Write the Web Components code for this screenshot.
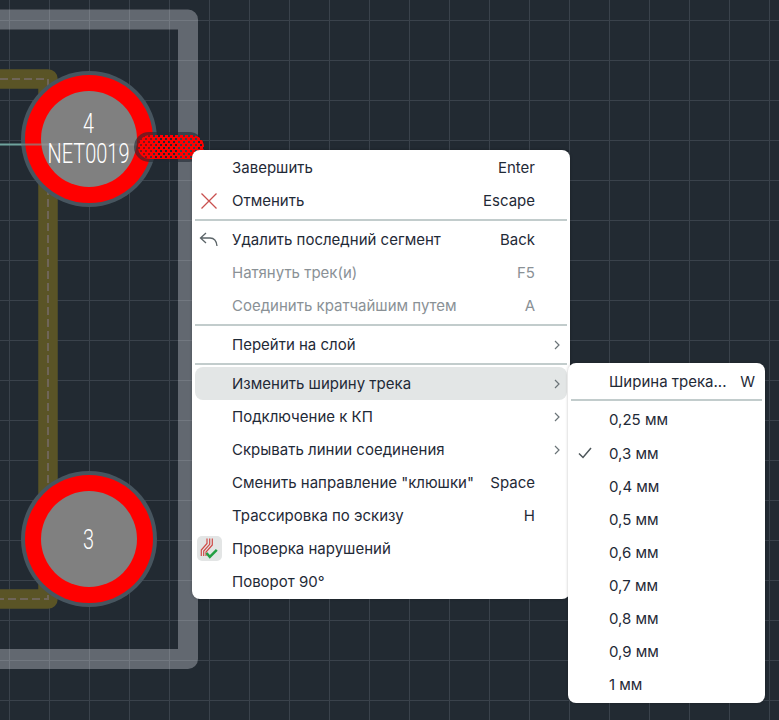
<!DOCTYPE html>
<html lang="ru">
<head>
<meta charset="utf-8">
<title>Трассировка</title>
<style>
  html, body { margin: 0; padding: 0; background: #222a32; }
  body { width: 779px; height: 720px; overflow: hidden; font-family: Inter, "Liberation Sans", sans-serif; }
</style>
</head>
<body>
<pcb-canvas>
  <ctx-menu style="left:192px;top:150px;width:378px">
    <ctx-item shortcut="Enter">Завершить</ctx-item>
    <ctx-item shortcut="Escape">
      <svg slot="icon" width="18" height="18" viewBox="0 0 18 18" fill="none" stroke="#c9504f" stroke-width="1.3"><path d="M1.5 1.5l15 15M16.5 1.5l-15 15"/></svg>
      Отменить
    </ctx-item>
    <ctx-sep></ctx-sep>
    <ctx-item shortcut="Back">
      <svg slot="icon" width="20" height="16" viewBox="0 0 20 16" fill="none" stroke="#5b6468" stroke-width="1.3"><path d="M7 1L1.5 6 7 11M1.5 6H11c4 0 6.500 3 7 8"/></svg>
      Удалить последний сегмент
    </ctx-item>
    <ctx-item shortcut="F5" disabled>Натянуть трек(и)</ctx-item>
    <ctx-item shortcut="A" disabled>Соединить кратчайшим путем</ctx-item>
    <ctx-sep></ctx-sep>
    <ctx-item arrow>Перейти на слой</ctx-item>
    <ctx-sep></ctx-sep>
    <ctx-item arrow active>Изменить ширину трека</ctx-item>
    <ctx-item arrow>Подключение к КП</ctx-item>
    <ctx-item arrow>Скрывать линии соединения</ctx-item>
    <ctx-item shortcut="Space">Сменить направление "клюшки"</ctx-item>
    <ctx-item shortcut="H">Трассировка по эскизу</ctx-item>
    <ctx-item>
      <svg slot="icon" width="25" height="25" viewBox="0 0 25 25" fill="none">
        <rect width="25" height="25" rx="5" fill="#e3e5e5"/>
        <path d="M4.300 20v-6l5.700-6.500V2.500M6.700 20v-5l6-6.700V2.500M9 20v-4l6.300-7V2.500" stroke="#cf4a46" stroke-width="1.200"/>
        <path d="M9.500 17l3.300 3.800 7-7" stroke="#23a043" stroke-width="2.500"/>
      </svg>
      Проверка нарушений
    </ctx-item>
    <ctx-item>Поворот 90°</ctx-item>
  </ctx-menu>

  <ctx-menu style="left:568px;top:363px;width:197px;--trail:7px;--row:33.13px;--pad-top:2.3px;--sep-top:1px;--icon-gap:10px">
    <ctx-item shortcut="W">Ширина трека...</ctx-item>
    <ctx-sep></ctx-sep>
    <ctx-item>0,25 мм</ctx-item>
    <ctx-item>
      <svg slot="icon" width="14" height="12" viewBox="0 0 14 12" fill="none" stroke="#4c5559" stroke-width="1.500"><path d="M1 6.500l4 4 8-9.500"/></svg>
      0,3 мм
    </ctx-item>
    <ctx-item>0,4 мм</ctx-item>
    <ctx-item>0,5 мм</ctx-item>
    <ctx-item>0,6 мм</ctx-item>
    <ctx-item>0,7 мм</ctx-item>
    <ctx-item>0,8 мм</ctx-item>
    <ctx-item>0,9 мм</ctx-item>
    <ctx-item>1 мм</ctx-item>
  </ctx-menu>
</pcb-canvas>

<script>
  class PcbCanvas extends HTMLElement {
    constructor() {
      super();
      this.attachShadow({ mode: "open" });
    }

    connectedCallback() {
      this.shadowRoot.innerHTML = `
        <style>
          :host { display: block; position: relative; width: 779px; height: 720px; overflow: hidden; background: #222a32; }
          svg { display: block; }
          text { fill: #fff; font-family: Roboto, sans-serif; font-weight: 300; text-anchor: middle; }
        </style>
        <svg width="779" height="720" viewBox="0 0 779 720">
          <defs>
            <pattern id="grid" width="40" height="40" patternUnits="userSpaceOnUse" x="9" y="20">
              <path d="M0.500 0V40M0 0.500H40" stroke="#3a424b" stroke-width="1" fill="none"/>
            </pattern>
            <pattern id="hatch" width="5" height="6" patternUnits="userSpaceOnUse">
              <path fill-rule="evenodd" fill="#ff0000" shape-rendering="crispEdges" d="M0 0H5V6H0zM0 0H2V2H0zM3 3H5V5H3z"/>
            </pattern>
          </defs>
          <rect width="779" height="720" fill="url(#grid)"/>

          <!-- board outline -->
          <path d="M-20 19.500H188V659H-20" fill="none" stroke="#dfe3e8" stroke-opacity=".34" stroke-width="20" stroke-linejoin="round"/>

          <!-- track -->
          <path d="M0 79H48V599H0" fill="none" stroke="#5a5426" stroke-width="19.500" stroke-linejoin="round"/>
          <path d="M0 79H48V599H0" fill="none" stroke="#6f6558" stroke-width="2" stroke-dasharray="8 4"/>

          <!-- net line -->
          <path d="M0 144.500H60" stroke="#6fa39d" stroke-width="2"/>

          <!-- pad 4 -->
          <circle cx="89" cy="139" r="68" fill="#47555f"/>
          <circle cx="89" cy="139" r="64" fill="#f00"/>
          <circle cx="89" cy="139" r="48" fill="#808080"/>
          <path d="M21 144.500H41" stroke="#6fa39d" stroke-opacity=".6" stroke-width="2"/>
          <path d="M41 144.500H137" stroke="#b9b9b9" stroke-opacity=".25" stroke-width="2"/>
          <text x="88.500" y="133" font-size="28" textLength="11" lengthAdjust="spacingAndGlyphs">4</text>
          <text x="88.500" y="163" font-size="28" textLength="82" lengthAdjust="spacingAndGlyphs">NET0019</text>

          <!-- pad 3 -->
          <circle cx="89" cy="539" r="68" fill="#47555f"/>
          <circle cx="89" cy="539" r="64" fill="#f00"/>
          <circle cx="89" cy="539" r="48" fill="#808080"/>
          <text x="88.500" y="549" font-size="28" textLength="11" lengthAdjust="spacingAndGlyphs">3</text>

          <!-- routed segment -->
          <rect x="134" y="132" width="70" height="30" rx="15" fill="#222a32" fill-opacity=".6"/>
          <rect x="138" y="135" width="66" height="24" rx="12" fill="url(#hatch)"/>
        </svg>
        <slot></slot>
      `;
    }
  }

  class CtxMenu extends HTMLElement {
    constructor() {
      super();
      this.attachShadow({ mode: "open" });
    }

    connectedCallback() {
      this.shadowRoot.innerHTML = `
        <style>
          :host {
            display: flex;
            flex-direction: column;
            position: absolute;
            box-sizing: border-box;
            padding: var(--pad-top, 1px) 3px 1px;
            background: #fff;
            border-radius: 8px;
            box-shadow: 0 0 3px rgba(0, 0, 0, .25);
          }
        </style>
        <slot></slot>
      `;
    }
  }

  class CtxSep extends HTMLElement {
    constructor() {
      super();
      this.attachShadow({ mode: "open" });
    }

    connectedCallback() {
      this.shadowRoot.innerHTML = `
        <style>
          :host { display: block; height: 2px; margin: var(--sep-top, 2px) 0 2px; background: #c2cccc; }
        </style>
      `;
    }
  }

  class CtxItem extends HTMLElement {
    constructor() {
      super();
      this.attachShadow({ mode: "open" });
    }

    connectedCallback() {
      const shortcut = this.getAttribute("shortcut");
      const arrow = this.hasAttribute("arrow");

      this.shadowRoot.innerHTML = `
        <style>
          :host {
            display: flex;
            align-items: center;
            height: var(--row, 33px);
            font: 15px Inter, "Liberation Sans", sans-serif;
            color: #1f2a37;
            border-radius: 8px;
            white-space: nowrap;
          }
          :host([disabled]) { color: #8a9196; }
          :host([active]) { background: #e3e6e6; }
          .icon { flex: none; display: flex; align-items: center; justify-content: center; width: 28px; margin-right: var(--icon-gap, 9px); }
          .label { flex: 1; }
          .key { flex: none; }
          .trail { flex: none; box-sizing: border-box; width: var(--trail, 32px); padding-right: 7px; display: flex; justify-content: flex-end; }
        </style>
        <span class="icon"><slot name="icon"></slot></span>
        <span class="label"><slot></slot></span>
        ${shortcut ? `<span class="key">${shortcut}</span>` : ""}
        <span class="trail">
          ${arrow ? `<svg width="6" height="10" viewBox="0 0 6 10" fill="none" stroke="#6b7478" stroke-width="1.200"><path d="M1 1l4 4-4 4"/></svg>` : ""}
        </span>
      `;
    }
  }

  customElements.define("pcb-canvas", PcbCanvas);
  customElements.define("ctx-menu", CtxMenu);
  customElements.define("ctx-sep", CtxSep);
  customElements.define("ctx-item", CtxItem);
</script>
</body>
</html>
